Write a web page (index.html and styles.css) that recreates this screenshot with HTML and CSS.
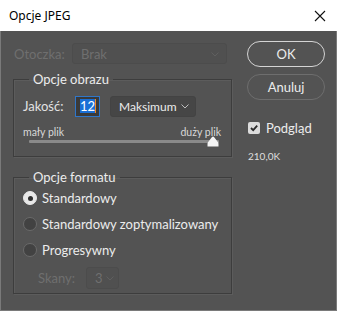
FILE: index.html
```html
<!DOCTYPE html>
<html lang="pl">
<head>
  <meta charset="UTF-8" />
  <title>Opcje JPEG</title>
  <link rel="stylesheet" href="styles.css">
</head>
<body>
  <div class="window">
    <!-- Title bar -->
    <div class="titlebar">
      <span class="title">Opcje JPEG</span>
      <svg class="close" width="12" height="12" viewBox="0 0 12 12">
        <path d="M1 1 L11 11 M11 1 L1 11" stroke="#111" stroke-width="1.1" fill="none"/>
      </svg>
    </div>

    <div class="content">
      <!-- Left column -->
      <div class="left">
        <div class="matte-row">
          <span class="label disabled">Otoczka:</span>
          <div class="select select-matte disabled">
            <span>Brak</span>
            <svg class="chev" width="8" height="5" viewBox="0 0 8 5"><path d="M0.5 0.5 L4 4 L7.5 0.5" stroke="#5f5f5f" fill="none"/></svg>
          </div>
        </div>

        <fieldset class="group group-image">
          <legend>Opcje obrazu</legend>
          <div class="quality-row">
            <span class="label">Jakość:</span>
            <div class="num-input"><span class="sel">12</span><span class="caret"></span></div>
            <div class="select select-quality">
              <span>Maksimum</span>
              <svg class="chev" width="8" height="5" viewBox="0 0 8 5"><path d="M0.5 0.5 L4 4 L7.5 0.5" stroke="#bdbdbd" fill="none"/></svg>
            </div>
          </div>
          <div class="slider-labels">
            <span>mały plik</span>
            <span>duży plik</span>
          </div>
          <div class="slider">
            <div class="track"></div>
            <svg class="thumb" width="12" height="11" viewBox="0 0 12 11">
              <path d="M6 0.5 Q6.6 0.5 7.2 1.3 L11.2 6.5 Q11.5 7 11.5 8 L11.5 10.5 L0.5 10.5 L0.5 8 Q0.5 7 0.8 6.5 L4.8 1.3 Q5.4 0.5 6 0.5 Z" fill="#f4f4f4"/>
            </svg>
          </div>
        </fieldset>

        <fieldset class="group group-format">
          <legend>Opcje formatu</legend>
          <label class="radio-row"><span class="radio checked"></span>Standardowy</label>
          <label class="radio-row"><span class="radio"></span>Standardowy zoptymalizowany</label>
          <label class="radio-row"><span class="radio"></span>Progresywny</label>
          <div class="scans-row">
            <span class="label disabled">Skany:</span>
            <div class="select select-scans disabled">
              <span>3</span>
              <svg class="chev" width="8" height="5" viewBox="0 0 8 5"><path d="M0.5 0.5 L4 4 L7.5 0.5" stroke="#5f5f5f" fill="none"/></svg>
            </div>
          </div>
        </fieldset>
      </div>

      <!-- Right column -->
      <div class="right">
        <button class="btn btn-default">OK</button>
        <button class="btn">Anuluj</button>
        <label class="check-row">
          <span class="checkbox">
            <svg width="10" height="10" viewBox="0 0 10 10"><path d="M2 5 L4.2 7.2 L8.2 2.6" stroke="#2b2b2b" stroke-width="1.8" fill="none"/></svg>
          </span>
          Podgląd
        </label>
        <div class="filesize">210,0K</div>
      </div>
    </div>
  </div>
</body>
</html>
```

FILE: styles.css
```css
* { margin: 0; padding: 0; box-sizing: border-box; }
body {
  font-family: Lato, "Noto Sans", sans-serif;
  font-size: 13px;
  background: #535353;
  color: #e6e6e6;
  white-space: nowrap;
}
.window {
  width: 337px;
  height: 311px;
  background: #535353;
  border: 1px solid #7a7a7a;
  border-top: none;
}

/* title bar */
.titlebar {
  height: 31px;
  background: #fff;
  display: flex;
  align-items: center;
  justify-content: space-between;
  padding: 0 11px 0 9px;
  margin: 0 -1px;
}
.title {
  font-size: 12px;
  color: #000;
  font-family: "Noto Sans", sans-serif;
}

.content {
  display: flex;
  padding: 12px 0 0 12px;
}
.left { width: 219px; }
.right {
  margin-left: 15px;
  width: 79px;
  display: flex;
  flex-direction: column;
}

.label { color: #e2e2e2; }
.disabled { color: #6f6f6f; }

/* select boxes */
.select {
  display: flex;
  align-items: center;
  justify-content: space-between;
  height: 21px;
  border-radius: 3px;
  padding: 0 7px 0 8px;
  background: #4a4a4a;
  border: 1px solid #454545;
}
.select.disabled {
  background: #505050;
  border-color: #4c4c4c;
}
.chev { margin-top: 1px; }

.matte-row {
  display: flex;
  align-items: center;
  height: 21px;
  padding-left: 1px;
}
.matte-row .label { width: 58px; }
.select-matte { width: 155px; }

/* groups */
.group {
  border: 1px solid #3d3d3d;
  box-shadow: inset 1px 1px 0 #5c5c5c, 1px 1px 0 #5c5c5c;
  padding: 0 9px 0 9px;
}
.group legend {
  margin-left: 6px;
  padding: 0 4px;
  color: #ececec;
}
.group-image {
  margin-top: 7px;
  height: 86px;
}
.quality-row {
  display: flex;
  align-items: center;
  margin-top: 8px;
  height: 22px;
}
.quality-row .label { width: 52px; }
.num-input {
  width: 25px;
  height: 21px;
  border: 1px solid #2f76c9;
  background: #3a3a3a;
  display: flex;
  align-items: center;
  padding-left: 4px;
}
.num-input .sel {
  background: #1a6fd6;
  color: #fff;
  line-height: 14px;
}
.num-input .caret {
  width: 1px;
  height: 14px;
  background: #f08a24;
}
.select-quality {
  width: 86px;
  margin-left: 10px;
  padding: 0 6px 0 8px;
  background: #464646;
  border-color: #434343;
  color: #ececec;
  font-size: 12px;
}
.slider-labels {
  display: flex;
  justify-content: space-between;
  font-size: 10.5px;
  color: #d8d8d8;
  margin-top: 9px;
  padding-right: 1px;
}
.slider {
  position: relative;
  height: 12px;
  margin: 2px 0 0 6px;
}
.track {
  height: 3px;
  background: #8a8a8a;
  border-radius: 1px;
  width: 190px;
}
.thumb {
  position: absolute;
  left: 178px;
  top: -4px;
}

.group-format {
  margin-top: 12px;
  height: 125px;
}
.radio-row {
  display: flex;
  align-items: center;
  height: 26px;
  color: #ececec;
}
.radio {
  width: 14px;
  height: 14px;
  border-radius: 50%;
  background: #424242;
  border: 1px solid #6a6a6a;
  margin: 0 5px 0 0;
  display: flex;
  align-items: center;
  justify-content: center;
}
.radio.checked { background: #e8e8e8; border-color: #e8e8e8; }
.radio.checked::after {
  content: "";
  width: 5px;
  height: 5px;
  border-radius: 50%;
  background: #2e2e2e;
}
.scans-row {
  display: flex;
  align-items: center;
  margin-top: 4px;
  padding-left: 15px;
}
.scans-row .label { width: 48px; }
.select-scans {
  width: 33px;
  height: 22px;
  padding: 0 4px 0 8px;
}

/* buttons */
.btn {
  height: 26px;
  width: 78px;
  border-radius: 13px;
  background: #535353;
  color: #ececec;
  font-family: inherit;
  font-size: 13px;
  border: 1px solid #6e6e6e;
  margin-top: -2px;
}
.btn-default {
  border-color: #d4d4d4;
  margin-bottom: 9px;
}
.check-row {
  display: flex;
  align-items: center;
  margin-top: 20px;
  padding-left: 1px;
  color: #ececec;
}
.checkbox {
  width: 12px;
  height: 12px;
  border-radius: 2px;
  background: #dcdcdc;
  display: flex;
  align-items: center;
  justify-content: center;
  margin-right: 6px;
}
.filesize {
  margin-top: 14px;
  padding-left: 1px;
  font-size: 10px;
  color: #dedede;
}
```
